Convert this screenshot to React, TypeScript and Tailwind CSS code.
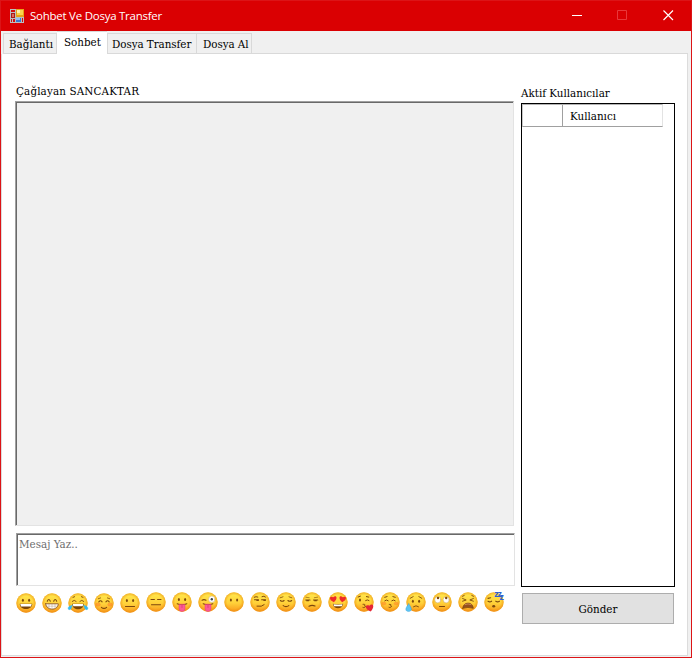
import type { ReactNode } from "react";

const INK = "#7d480c";

function Face({ children, raised }: { children: ReactNode; raised?: boolean }) {
  return (
    <svg
      viewBox="0 0 20 20"
      className={`block size-5 shrink-0 overflow-visible ${raised ? "" : "translate-y-px"}`}
      fill="none"
      stroke={INK}
      strokeWidth="1.1"
      strokeLinecap="round"
    >
      <circle cx="10" cy="10" r="9.7" fill="url(#skin)" stroke="none" />
      <circle cx="10" cy="10" r="9.7" fill="url(#rim)" stroke="none" />
      {children}
    </svg>
  );
}

function Eyes({ y = 7.6 }: { y?: number }) {
  return (
    <g fill={INK} stroke="none">
      <ellipse cx="6.9" cy={y} rx="1" ry="1.5" />
      <ellipse cx="13.1" cy={y} rx="1" ry="1.5" />
    </g>
  );
}

function Tongue() {
  return (
    <>
      <path d="M5.2 11.8q4.8 1.8 9.6 0" />
      <path d="M7 12.6v3.8a3 3 0 0 0 6 0v-3.8z" fill="#fb5c94" stroke="#e8397a" strokeWidth=".5" />
      <path d="M10 13v2.5" stroke="#d52d6b" strokeWidth=".6" />
    </>
  );
}

const heart = "M0 2.6C-4.2-.4-2.4-3.2 0-1.3 2.4-3.2 4.2-.4 0 2.6z";

const faces: ReactNode[] = [
  <>
    <Eyes y={7.2} />
    <path d="M3.7 10.8h12.6c-.2 7-12.4 7-12.6 0z" fill="#7a4508" stroke="none" />
    <path d="M4.3 11h11.4l-.7 2.5H5z" fill="#fff" stroke="none" />
  </>,
  <>
    <path d="M5.3 8.2q1.5-3.4 3 0M11.7 8.2q1.5-3.4 3 0" />
    <path d="M3.7 10.8h12.6c-.2 7.2-12.4 7.2-12.6 0z" fill="#fff" stroke="#8b531a" strokeWidth=".9" />
    <path d="M4.3 13.2h11.4M7 11v4.6M10 11v5M13 11v4.6" stroke="#ae8a61" strokeWidth=".4" />
  </>,
  <>
    <path d="M4.2 8.4q2-2.4 4 0M11.8 8.4q2-2.4 4 0M5 4.4l1.6-.7M13.4 3.7l1.6.7" strokeWidth=".9" />
    <path d="M4.2 10.8h11.6c-.2 7.4-11.4 7.4-11.6 0z" fill="#7a4508" stroke="none" />
    <path d="M4.8 11h10.4l-.5 2.2H5.3z" fill="#fff" stroke="none" />
    <path d="M4 12.5C1.3 12.7-.3 14.2.2 16c1.1 1.5 3.6.5 3.8-3.5zM16 12.5c2.7.2 4.3 1.7 3.8 3.5-1.1 1.5-3.6.5-3.8-3.5z" fill="#34baf0" stroke="#34baf0" strokeWidth=".5" />
  </>,
  <>
    <ellipse cx="4" cy="11.6" rx="2.6" ry="2" fill="#ff7424" fillOpacity=".5" stroke="none" />
    <ellipse cx="16" cy="11.6" rx="2.6" ry="2" fill="#ff7424" fillOpacity=".5" stroke="none" />
    <path d="M4.8 8.8q1.7-2 3.3 0M11.9 8.8q1.7-2 3.3 0M7.4 14.3q2.6 2.2 5.2 0" />
    <path d="M4.4 5.7l2.2-.8M13.4 4.9l2.2.8" strokeWidth=".8" />
  </>,
  <>
    <Eyes />
    <path d="M5.5 13.5h9" />
  </>,
  <>
    <path d="M5 7.5h3.4M11.6 7.5H15M5.5 12.8h9" />
  </>,
  <>
    <Eyes />
    <Tongue />
  </>,
  <>
    <path d="M4 8.2q2-1.2 4 0" />
    <circle cx="13.8" cy="7.2" r="3.2" fill="#fff" stroke="#c9a97b" strokeWidth=".5" />
    <circle cx="13.8" cy="7.2" r="1.2" fill="#37434d" stroke="none" />
    <Tongue />
  </>,
  <Eyes y={8} />,
  <>
    <path d="M4.3 5.2q1.7-1 3.5-.2M12 4.6q2-1 3.5.4M7 14.2q5 .9 7.2-1.5" strokeWidth="1" />
    <path d="M4.5 7.8h4M11.6 7.8h4" />
    <path d="M7 8.4h1.2M14 8.4h1.2" strokeWidth="1.4" />
  </>,
  <>
    <path d="M4.3 8.5q1.9 1.5 3.8 0M11.9 8.5q1.9 1.5 3.8 0M7.2 13.6q2.8 2 5.6 0" />
    <path d="M4.2 5.8l2.8-1M13 4.8l2.8 1" strokeWidth=".8" />
  </>,
  <>
    <path d="M3.7 8h4.3M11.5 8h4.3M7 14.3q3-1.8 6-.2" />
    <path d="M4.8 8.7h1.6M12.7 8.7h1.6" strokeWidth="1.3" />
    <path d="M4 5.3l3.2.4M12.3 5.7l3.3-.5" strokeWidth=".6" />
  </>,
  <>
    <g fill="#ee2a2a" stroke="none">
      <path d={heart} transform="translate(5.4 6.9) rotate(-8) scale(1.3)" />
      <path d={heart} transform="translate(14.6 6.9) rotate(8) scale(1.3)" />
    </g>
    <path d="M4.8 11.8q5.2 1.2 10.4 0c-.6 6-9.8 6-10.4 0z" fill="#7a4508" stroke="none" />
    <path d="M5.5 12.3q4.5.9 9 0l-.5 1.9H6z" fill="#fff" stroke="none" />
  </>,
  <>
    <ellipse cx="6" cy="8" rx="1" ry="1.5" fill={INK} stroke="none" />
    <path d="M11.6 8.5q1.7-1.4 3.4 0M4.2 5l2.2-.8M12.4 4.6l2.4.5" strokeWidth="1" />
    <path d="M9 12.3q2.8-.4 1.5 1.3q2 .2.4 1.6-1 .8-2 .3" strokeWidth=".9" />
    <path d={heart} transform="translate(15.8 15.7) rotate(-12) scale(1.5)" fill="#e62636" stroke="none" />
  </>,
  <>
    <ellipse cx="3.9" cy="11.5" rx="2.5" ry="1.8" fill="#ff7424" fillOpacity=".45" stroke="none" />
    <ellipse cx="16.1" cy="11.5" rx="2.5" ry="1.8" fill="#ff7424" fillOpacity=".45" stroke="none" />
    <path d="M4.8 8.7q1.7-1.6 3.4 0M11.8 8.7q1.7-1.6 3.4 0M4.7 5.3l2.4-.7M12.9 4.6l2.4.7" strokeWidth="1" />
    <path d="M9.2 12.3q2.8-.2 1.4 1.3q2 .3.2 1.6-1 .6-1.8.2" strokeWidth=".9" />
  </>,
  <>
    <Eyes y={9.3} />
    <path d="M4.2 6.3l3-1.7M12.8 4.6l3 1.7M7.5 14.7q2.5-2 5 0" strokeWidth=".9" />
    <path d="M2.8 11.8C.7 14.4-.2 16.2-.2 17.3c0 3 5.6 3 5.6 0 0-1.4-1-3-2.6-5.5z" fill="#5cc4f2" stroke="#2f9cda" strokeWidth=".4" />
  </>,
  <>
    <circle cx="5.8" cy="7.8" r="3.1" fill="#fff" stroke="#c99d58" strokeWidth=".5" />
    <circle cx="14.2" cy="7.8" r="3.1" fill="#fff" stroke="#c99d58" strokeWidth=".5" />
    <circle cx="6" cy="6" r="1.2" fill={INK} stroke="none" />
    <circle cx="14.2" cy="6" r="1.2" fill={INK} stroke="none" />
    <path d="M7.5 14.5h5" />
  </>,
  <>
    <path d="M4.6 6.5l3.6 1.5-3.6 1.2M15.4 6.5l-3.6 1.5 3.6 1.2M4.5 4.3l1.7-.8M13.8 3.5l1.7.8" strokeWidth=".9" />
    <path d="M4.7 16.3c.5-7 10.1-7 10.6 0q-5.3-1.8-10.6 0z" fill="#96501d" stroke={INK} strokeWidth=".7" />
    <path d="M7 12.5q3-1.4 6 0" stroke="#dfa277" strokeWidth=".7" />
  </>,
  <>
    <path d="M4 9.2q1.8 1.3 3.6 0M11.8 9.2q1.8 1.3 3.6 0M4 6.4l2.6-.7" />
    <ellipse cx="9.7" cy="14.3" rx="1.5" ry="1.2" fill={INK} stroke="none" />
    <text x="10.2 13.6 15.4" y="5 5 8" fontSize="9" fill="#2c5fd0" stroke="none" className="font-['Liberation_Sans'] font-bold">
      zzz
    </text>
  </>,
];

function TitleBar() {
  return (
    <header className="flex h-[30px] shrink-0 items-center bg-[#da0002] pl-2 text-white">
      <svg viewBox="0 0 16 16" className="size-4 shrink-0" shapeRendering="crispEdges">
        <path d="M1 1h14v14H1z" fill="#b9bec2" />
        <path d="M2 2h4v2H2z" fill="#d50d0d" />
        <path d="M2 5h4v5H2z" fill="#a81a1a" />
        <path d="M3 6h2v3H3z" fill="#dd6b5c" />
        <path d="M2 11h1v3H2zM4 11h2v3H4zM13 10h1v4h-1z" fill="#d50d0d" />
        <path d="M7 1h8v8H7z" fill="#e8a317" />
        <path d="M8 2h6v5H8z" fill="#fbd34c" />
        <path d="M8 2h3v3H8z" fill="#fff0ae" />
        <path d="M7 10h5v4H7z" fill="#3a78d0" />
        <path d="M7 10h4v2H7z" fill="#93bdf4" />
      </svg>
      <h1 className="ml-[5px] font-['Open_Sans','Noto_Sans',sans-serif] text-[11.5px] leading-4 tracking-[-0.25px] whitespace-nowrap">
        Sohbet Ve Dosya Transfer
      </h1>
      <svg viewBox="0 0 105 12" className="mr-[15px] ml-auto h-3 w-[105px]" fill="none">
        <path d="M1 5.5h10" stroke="#fff" />
        <path d="M46.5 .5h9v9h-9z" stroke="#e9383a" />
        <path d="M92.5 .5l9.5 9.5M102 .5L92.5 10" stroke="#fff" strokeWidth="1.15" />
      </svg>
    </header>
  );
}

function Tabs() {
  return (
    <nav className="flex h-[23px] shrink-0 items-end bg-[#f0f0f0] pl-0.5 leading-4 whitespace-nowrap">
      <div className="h-[21px] w-[54px] border border-[#d9d9d9] pt-0.5 pl-[5px]">Bağlantı</div>
      <div className="h-[23px] w-[50px] border-t border-[#d9d9d9] bg-white pt-0.5 pl-[7px]">Sohbet</div>
      <div className="h-[21px] w-[90px] border border-[#d9d9d9] pt-0.5 pl-1 tracking-[-0.05px]">Dosya Transfer</div>
      <div className="h-[21px] w-[55px] border border-l-0 border-[#d9d9d9] pt-0.5 pl-[6px] tracking-[-0.05px]">Dosya Al</div>
      <div className="h-px flex-1 bg-[#d9d9d9]" />
      <div className="h-px w-[3px] bg-[#f0f0f0]" />
    </nav>
  );
}

export default function App() {
  return (
    <div className="flex h-[658px] w-[692px] flex-col border border-[#dc1417] bg-[#f0f0f0] font-['DejaVu_Serif_Condensed','DejaVu_Serif',serif] text-[11.5px] text-black">
      <svg className="absolute size-0">
        <defs>
          <linearGradient id="skin" x1="0" y1="0" x2="0" y2="1">
            <stop offset="0" stopColor="#ffea4e" />
            <stop offset=".55" stopColor="#ffd13a" />
            <stop offset="1" stopColor="#f99a1c" />
          </linearGradient>
          <radialGradient id="rim">
            <stop offset=".7" stopColor="#f08c10" stopOpacity="0" />
            <stop offset="1" stopColor="#e88a10" stopOpacity=".6" />
          </radialGradient>
        </defs>
      </svg>
      <TitleBar />
      <Tabs />
      <main className="mr-[3px] mb-px flex flex-1 gap-1.5 border-r border-b border-l border-[#dcdcdc] bg-white pl-[13px]">
        <section className="flex w-[500px] flex-col">
          <p className="mt-[29px] h-[18px] pl-px leading-4 tracking-[0.15px] whitespace-nowrap">Çağlayan SANCAKTAR</p>
          <div className="h-[425px] w-[499px] border border-t-[#a0a0a0] border-r-[#e3e3e3] border-b-[#e3e3e3] border-l-[#a0a0a0]">
            <div className="h-full border-t border-l border-[#696969] bg-[#f0f0f0]" />
          </div>
          <div className="mt-[7px] ml-px h-[53px] w-[499px] border border-t-[#a0a0a0] border-r-[#e3e3e3] border-b-[#e3e3e3] border-l-[#a0a0a0]">
            <div className="h-full border-t border-l border-[#696969] pt-px pl-px leading-4 text-[#6d6d6d]">Mesaj Yaz..</div>
          </div>
          <div className="mt-1.5 ml-px flex gap-1.5">
            {faces.map((face, i) => (
              <Face key={i} raised={i > 4}>
                {face}
              </Face>
            ))}
          </div>
        </section>
        <aside className="flex w-[154px] flex-col">
          <p className="mt-[31px] h-[18px] leading-4 whitespace-nowrap">Aktif Kullanıcılar</p>
          <div className="h-[484px] border border-black">
            <div className="flex h-[23px] w-[141px] border border-t-[#b4b4b4] border-r-[#e3e3e3] border-b-[#a0a0a0] border-l-[#c8c8c8] leading-4">
              <div className="w-10 border-r border-[#a0a0a0]" />
              <div className="pt-[3px] pl-[7px]">Kullanıcı</div>
            </div>
          </div>
          <button className="mt-1.5 ml-px h-[31px] w-[152px] border border-[#adadad] bg-[#e1e1e1] leading-4">Gönder</button>
        </aside>
      </main>
    </div>
  );
}
